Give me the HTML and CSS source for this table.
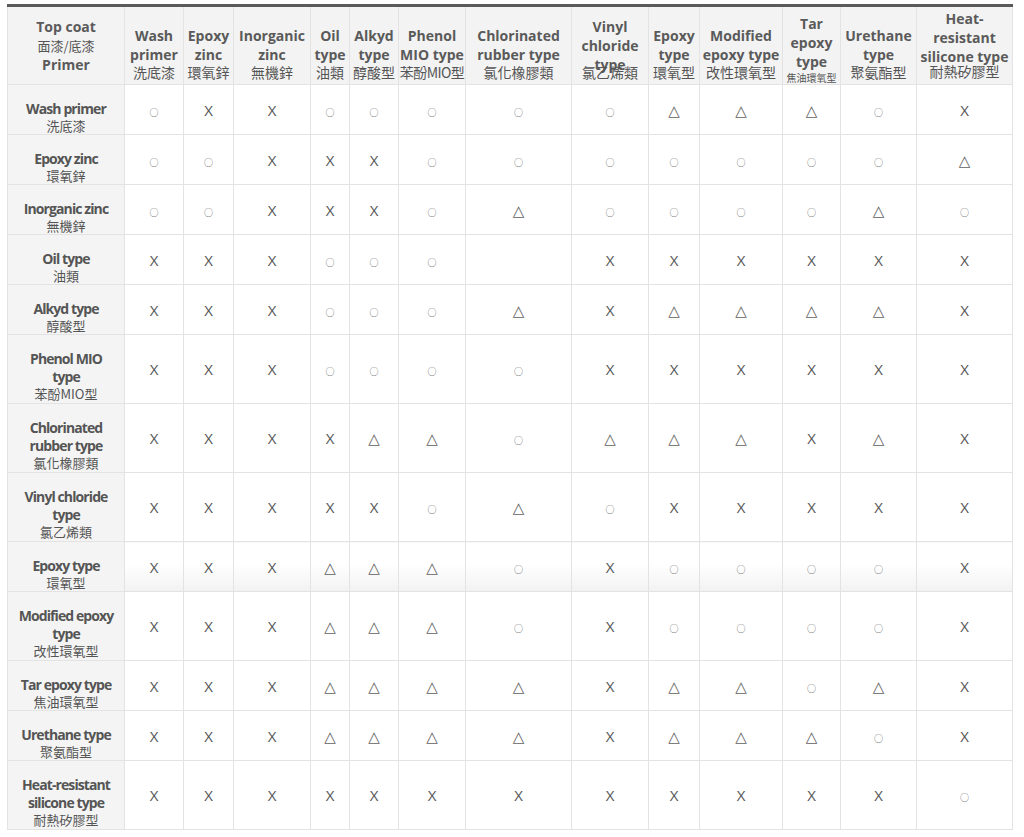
FILE: index.html
```html
<!DOCTYPE html>
<html>
<head>
<meta charset="utf-8">
<link rel="stylesheet" href="styles.css">
</head>
<body>
<table class="grid">
<colgroup>
<col class="c0"><col class="c1"><col class="c2"><col class="c3"><col class="c4"><col class="c5"><col class="c6"><col class="c7"><col class="c8"><col class="c9"><col class="c10"><col class="c11"><col class="c12"><col class="c13">
</colgroup>
<thead>
<tr class="hrow">
<th class="corner"><span class="en">Top coat</span><span class="zh small">面漆/底漆</span><span class="en">Primer</span></th>
<th><span class="en">Wash primer</span><span class="zh">洗底漆</span></th>
<th><span class="en">Epoxy zinc</span><span class="zh">環氧鋅</span></th>
<th><span class="en">Inorganic zinc</span><span class="zh">無機鋅</span></th>
<th><span class="en">Oil type</span><span class="zh">油類</span></th>
<th><span class="en">Alkyd type</span><span class="zh">醇酸型</span></th>
<th><span class="en">Phenol MIO type</span><span class="zh narrow">苯酚MIO型</span></th>
<th><span class="en">Chlorinated rubber type</span><span class="zh">氯化橡膠類</span></th>
<th><span class="en">Vinyl chloride type</span><span class="zh tight">氯乙烯類</span></th>
<th><span class="en">Epoxy type</span><span class="zh">環氧型</span></th>
<th><span class="en">Modified epoxy type</span><span class="zh">改性環氧型</span></th>
<th class="tar"><span class="en">Tar epoxy type</span><span class="zh tiny">焦油環氧型</span></th>
<th><span class="en">Urethane type</span><span class="zh">聚氨酯型</span></th>
<th class="heat"><span class="en">Heat-resistant silicone type</span><span class="zh tight2">耐熱矽膠型</span></th>
</tr>
</thead>
<tbody>
<tr class="r2"><th class="side"><span class="en">Wash primer</span><span class="zh">洗底漆</span></th><td><span class="o">○</span></td><td>X</td><td>X</td><td><span class="o">○</span></td><td><span class="o">○</span></td><td><span class="o">○</span></td><td><span class="o">○</span></td><td><span class="o">○</span></td><td><span class="t">△</span></td><td><span class="t">△</span></td><td><span class="t">△</span></td><td><span class="o">○</span></td><td>X</td></tr>
<tr class="r2"><th class="side"><span class="en">Epoxy zinc</span><span class="zh">環氧鋅</span></th><td><span class="o">○</span></td><td><span class="o">○</span></td><td>X</td><td>X</td><td>X</td><td><span class="o">○</span></td><td><span class="o">○</span></td><td><span class="o">○</span></td><td><span class="o">○</span></td><td><span class="o">○</span></td><td><span class="o">○</span></td><td><span class="o">○</span></td><td><span class="t">△</span></td></tr>
<tr class="r2"><th class="side"><span class="en">Inorganic zinc</span><span class="zh">無機鋅</span></th><td><span class="o">○</span></td><td><span class="o">○</span></td><td>X</td><td>X</td><td>X</td><td><span class="o">○</span></td><td><span class="t">△</span></td><td><span class="o">○</span></td><td><span class="o">○</span></td><td><span class="o">○</span></td><td><span class="o">○</span></td><td><span class="t">△</span></td><td><span class="o">○</span></td></tr>
<tr class="r2"><th class="side"><span class="en">Oil type</span><span class="zh">油類</span></th><td>X</td><td>X</td><td>X</td><td><span class="o">○</span></td><td><span class="o">○</span></td><td><span class="o">○</span></td><td></td><td>X</td><td>X</td><td>X</td><td>X</td><td>X</td><td>X</td></tr>
<tr class="r2"><th class="side"><span class="en">Alkyd type</span><span class="zh">醇酸型</span></th><td>X</td><td>X</td><td>X</td><td><span class="o">○</span></td><td><span class="o">○</span></td><td><span class="o">○</span></td><td><span class="t">△</span></td><td>X</td><td><span class="t">△</span></td><td><span class="t">△</span></td><td><span class="t">△</span></td><td><span class="t">△</span></td><td>X</td></tr>
<tr class="r3"><th class="side"><span class="en">Phenol MIO type</span><span class="zh">苯酚MIO型</span></th><td>X</td><td>X</td><td>X</td><td><span class="o">○</span></td><td><span class="o">○</span></td><td><span class="o">○</span></td><td><span class="o">○</span></td><td>X</td><td>X</td><td>X</td><td>X</td><td>X</td><td>X</td></tr>
<tr class="r3"><th class="side"><span class="en">Chlorinated rubber type</span><span class="zh">氯化橡膠類</span></th><td>X</td><td>X</td><td>X</td><td>X</td><td><span class="t">△</span></td><td><span class="t">△</span></td><td><span class="o">○</span></td><td><span class="t">△</span></td><td><span class="t">△</span></td><td><span class="t">△</span></td><td>X</td><td><span class="t">△</span></td><td>X</td></tr>
<tr class="r3"><th class="side"><span class="en">Vinyl chloride type</span><span class="zh">氯乙烯類</span></th><td>X</td><td>X</td><td>X</td><td>X</td><td>X</td><td><span class="o">○</span></td><td><span class="t">△</span></td><td><span class="o">○</span></td><td>X</td><td>X</td><td>X</td><td>X</td><td>X</td></tr>
<tr class="r2 shade"><th class="side"><span class="en">Epoxy type</span><span class="zh">環氧型</span></th><td>X</td><td>X</td><td>X</td><td><span class="t">△</span></td><td><span class="t">△</span></td><td><span class="t">△</span></td><td><span class="o">○</span></td><td>X</td><td><span class="o">○</span></td><td><span class="o">○</span></td><td><span class="o">○</span></td><td><span class="o">○</span></td><td>X</td></tr>
<tr class="r3"><th class="side"><span class="en">Modified epoxy type</span><span class="zh">改性環氧型</span></th><td>X</td><td>X</td><td>X</td><td><span class="t">△</span></td><td><span class="t">△</span></td><td><span class="t">△</span></td><td><span class="o">○</span></td><td>X</td><td><span class="o">○</span></td><td><span class="o">○</span></td><td><span class="o">○</span></td><td><span class="o">○</span></td><td>X</td></tr>
<tr class="r2"><th class="side"><span class="en">Tar epoxy type</span><span class="zh">焦油環氧型</span></th><td>X</td><td>X</td><td>X</td><td><span class="t">△</span></td><td><span class="t">△</span></td><td><span class="t">△</span></td><td><span class="t">△</span></td><td>X</td><td><span class="t">△</span></td><td><span class="t">△</span></td><td><span class="o">○</span></td><td><span class="t">△</span></td><td>X</td></tr>
<tr class="r2"><th class="side"><span class="en">Urethane type</span><span class="zh">聚氨酯型</span></th><td>X</td><td>X</td><td>X</td><td><span class="t">△</span></td><td><span class="t">△</span></td><td><span class="t">△</span></td><td><span class="t">△</span></td><td>X</td><td><span class="t">△</span></td><td><span class="t">△</span></td><td><span class="t">△</span></td><td><span class="o">○</span></td><td>X</td></tr>
<tr class="r3"><th class="side"><span class="en">Heat-resistant silicone type</span><span class="zh">耐熱矽膠型</span></th><td>X</td><td>X</td><td>X</td><td>X</td><td>X</td><td>X</td><td>X</td><td>X</td><td>X</td><td>X</td><td>X</td><td>X</td><td><span class="o">○</span></td></tr>
</tbody>
</table>
</body>
</html>
```
FILE: styles.css
```css
html, body {
  margin: 0;
  padding: 0;
  background: #ffffff;
}
body {
  padding: 4px 0 0 7px;
  font-family: "Open Sans", "Noto Sans CJK TC", sans-serif;
  color: #555555;
}
.grid {
  border-collapse: collapse;
  table-layout: fixed;
  width: 1005px;
  border-top: 3px solid #5a5a5a;
}
.c0 { width: 117px; }
.c1 { width: 59px; }
.c2 { width: 50px; }
.c3 { width: 77px; }
.c4 { width: 39px; }
.c5 { width: 49px; }
.c6 { width: 67px; }
.c7 { width: 106px; }
.c8 { width: 77px; }
.c9 { width: 51px; }
.c10 { width: 83px; }
.c11 { width: 58px; }
.c12 { width: 76px; }
.c13 { width: 96px; }

.grid th, .grid td {
  border: 1px solid #e3e3e3;
  text-align: center;
  padding: 0;
}
.grid td {
  vertical-align: middle;
  font-size: 15px;
  color: #555555;
  background: #ffffff;
}
.hrow { height: 79px; }
.grid .hrow th {
  background: #f3f3f3;
  vertical-align: bottom;
  padding: 0 0 3px;
}
.grid .hrow th.corner { vertical-align: middle; padding-bottom: 0; }
.grid .hrow th.tar { padding-bottom: 0; }
.grid .hrow th.heat { padding-bottom: 4px; }
.hrow .en {
  display: block;
  font-family: "Open Sans", sans-serif;
  font-weight: 700;
  font-size: 14px;
  line-height: 19px;
  color: #5a5a5a;
}
.hrow .zh {
  display: block;
  font-family: "Noto Sans CJK TC", sans-serif;
  font-weight: 400;
  font-size: 14px;
  line-height: 17px;
  color: #555555;
}
.hrow .zh.small { font-size: 13px; line-height: 19px; }
.hrow .zh.narrow { letter-spacing: -0.6px; white-space: nowrap; }
.hrow .zh.tight { margin-top: -10px; }
.hrow .zh.tight2 { margin-top: -3px; }
.hrow .zh.tiny { font-size: 10px; line-height: 13px; }

.grid .side {
  background: #f4f4f4;
  vertical-align: middle;
  padding: 13px 8px 0;
}
.side .en {
  display: block;
  font-family: "Open Sans", sans-serif;
  font-weight: 700;
  font-size: 14px;
  line-height: 18px;
  letter-spacing: -0.9px;
  color: #555555;
}
.side .zh {
  display: block;
  font-family: "Noto Sans CJK TC", sans-serif;
  font-weight: 400;
  font-size: 13px;
  line-height: 15px;
  color: #555555;
}
.r2 { height: 50px; }
.r3 { height: 69px; }

.o {
  font-family: "Noto Sans CJK TC", sans-serif;
  font-size: 9px;
  color: #666666;
}
.t {
  font-family: "DejaVu Sans", sans-serif;
  font-size: 15px;
  color: #606060;
}
.shade th, .shade td {
  background-image: linear-gradient(to bottom, rgba(0,0,0,0) 45%, rgba(0,0,0,0.05) 100%);
}
```
